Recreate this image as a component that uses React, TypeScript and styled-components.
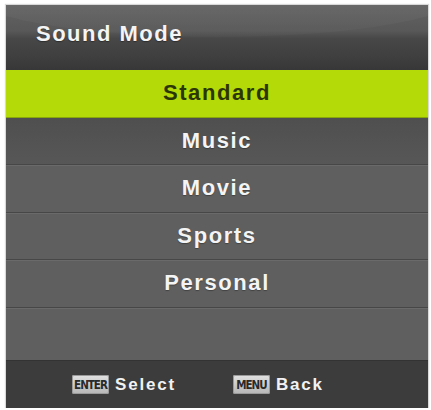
import * as React from 'react';
import styled, { createGlobalStyle } from 'styled-components';

const GlobalStyle = createGlobalStyle`
  html, body {
    margin: 0;
    padding: 0;
    background: #ffffff;
  }
  body {
    font-family: 'Liberation Sans', Arial, sans-serif;
  }
`;

const Panel = styled.div`
  margin: 5px 0 0 6px;
  width: 422px;
  height: 403px;
  display: flex;
  flex-direction: column;
  background: #5e5e5e;
  box-shadow: 0 0 1px 1px rgba(0, 0, 0, 0.15);
`;

const Header = styled.div`
  position: relative;
  height: 65px;
  display: flex;
  align-items: center;
  padding: 0 0 8px 30px;
  box-sizing: border-box;
  background: linear-gradient(
    to bottom,
    #626262 0%,
    #585858 40%,
    #474747 52%,
    #3f3f3f 80%,
    #373739 100%
  );
  overflow: hidden;
  &::before {
    content: '';
    position: absolute;
    left: -40px;
    right: -40px;
    top: -60px;
    height: 92px;
    border-radius: 50%;
    background: linear-gradient(to bottom, rgba(255, 255, 255, 0.08), rgba(255, 255, 255, 0.02));
  }
  span {
    position: relative;
    color: #f4f4f4;
    font-size: 22px;
    font-weight: bold;
    letter-spacing: 1.5px;
    text-shadow: 0 1px 1px rgba(0, 0, 0, 0.35);
  }
`;

const Item = styled.div<{ $active?: boolean; $first?: boolean }>`
  height: 47.5px;
  box-sizing: border-box;
  display: flex;
  align-items: center;
  justify-content: center;
  font-size: 22px;
  font-weight: bold;
  letter-spacing: 1.6px;
  color: ${(p) => (p.$active ? '#2c3604' : '#f4f4f4')};
  text-shadow: ${(p) => (p.$active ? 'none' : '0 1px 1px rgba(0,0,0,0.3)')};
  background: ${(p) =>
    p.$active
      ? '#b4da08'
      : p.$first
      ? 'linear-gradient(to bottom, #4f4f4f, #575757)'
      : '#5f5f5f'};
  border-bottom: 1px solid ${(p) => (p.$active ? '#8aa70a' : '#474747')};
  box-shadow: ${(p) => (p.$active || p.$first ? 'none' : 'inset 0 1px 0 #6a6a6a')};
`;

const Blank = styled.div`
  flex: 1;
  background: #5f5f5f;
  box-shadow: inset 0 1px 0 #6a6a6a;
`;

const Footer = styled.div`
  height: 48px;
  display: flex;
  align-items: center;
  padding: 0 0 0 66px;
  box-sizing: border-box;
  background: #3c3c3c;
  border-top: 1px solid #333;
`;

const Hint = styled.div`
  display: flex;
  align-items: center;
  gap: 6px;
  & + & {
    margin-left: 57px;
  }
  span {
    color: #f2f2f2;
    font-size: 17px;
    font-weight: bold;
    letter-spacing: 1.8px;
  }
`;

const Key = styled.div`
  width: 37px;
  height: 19px;
  border-radius: 2px;
  display: flex;
  align-items: center;
  justify-content: center;
  background: linear-gradient(to bottom, #e2e2e2, #b6b6b6);
  color: #2a2a2a;
  font-family: 'DejaVu Sans Condensed', 'Liberation Sans', sans-serif;
  font-size: 11.5px;
  font-weight: bold;
  letter-spacing: -1px;
  box-shadow: inset 0 0 0 1px #9a9a9a;
`;

const modes = ['Standard', 'Music', 'Movie', 'Sports', 'Personal'];

export default function App() {
  const [selected] = React.useState(0);
  return (
    <>
      <GlobalStyle />
      <Panel>
        <Header>
          <span>Sound Mode</span>
        </Header>
        {modes.map((m, i) => (
          <Item key={m} $active={i === selected} $first={i === selected + 1}>
            {m}
          </Item>
        ))}
        <Blank />
        <Footer>
          <Hint>
            <Key>ENTER</Key>
            <span>Select</span>
          </Hint>
          <Hint>
            <Key>MENU</Key>
            <span>Back</span>
          </Hint>
        </Footer>
      </Panel>
    </>
  );
}
